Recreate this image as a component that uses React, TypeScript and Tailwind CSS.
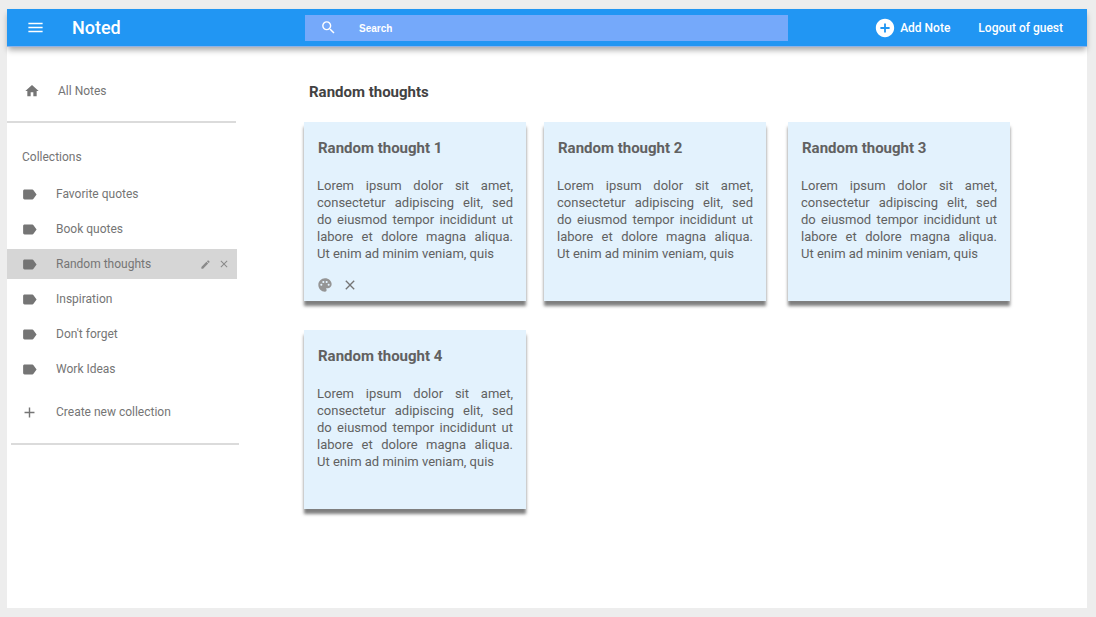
import { useState } from "react";
import {
  MdAdd,
  MdAddCircle,
  MdClose,
  MdEdit,
  MdHome,
  MdLabel,
  MdMenu,
  MdPalette,
  MdSearch,
} from "react-icons/md";

const collections = [
  "Favorite quotes",
  "Book quotes",
  "Random thoughts",
  "Inspiration",
  "Don't forget",
  "Work Ideas",
];

// The no-break space keeps "Ut enim" together at the start of the last sentence.
const noteText =
  "Lorem ipsum dolor sit amet, consectetur adipiscing elit, sed do eiusmod tempor incididunt ut labore et dolore magna aliqua. Ut\u00a0enim ad minim veniam, quis";

const notes = [1, 2, 3, 4].map((n) => ({
  title: `Random thought ${n}`,
  text: noteText,
  showActions: n === 1,
}));

function Header() {
  return (
    <header className="relative flex h-[38px] items-center border-b border-[#8fb2e6] bg-[#2196f3] pr-6 pl-[19px] text-white shadow-[0_4px_6px_-1px_rgba(0,0,0,0.35)]">
      <div className="flex w-[279px] shrink-0 items-center gap-[27px]">
        <button type="button" aria-label="Menu">
          <MdMenu className="size-[19px]" />
        </button>
        <h1 className="text-[18px] leading-6 font-medium">Noted</h1>
      </div>
      <label className="flex h-[26px] max-w-[483px] flex-1 items-center gap-[22px] bg-[#75a9fa] pl-[15px]">
        <MdSearch className="size-[17px]" />
        <input
          type="search"
          aria-label="Search"
          placeholder="Search"
          className="min-w-0 flex-1 bg-transparent pt-[2px] font-['Liberation_Sans',sans-serif] text-[10px] font-bold outline-none placeholder:text-white"
        />
      </label>
      <nav className="ml-auto flex shrink-0 items-center gap-7 text-[12px] font-medium">
        <button type="button" className="flex items-center gap-[4px]">
          <MdAddCircle className="size-[22px]" />
          Add Note
        </button>
        <a href="#logout">Logout of guest</a>
      </nav>
    </header>
  );
}

function Sidebar({
  selected,
  onSelect,
}: {
  selected: string;
  onSelect: (name: string) => void;
}) {
  return (
    <aside className="w-[232px] shrink-0 pt-[29px] text-[12px] text-[#757575]">
      <a href="#all" className="flex h-[30px] items-center gap-[18px] pl-[17px]">
        <MdHome className="size-4" />
        All Notes
      </a>
      <hr className="mt-[15px] w-[229px] border-t-2 border-[#dbdbdb]" />
      <h2 className="mt-[19px] pl-[15px] leading-[30px]">Collections</h2>
      <ul className="mt-[7px] flex flex-col gap-[5px]">
        {collections.map((name) => (
          <li
            key={name}
            className={
              name === selected
                ? "flex h-[30px] w-[230px] items-center bg-[#d6d6d6] pr-[7px]"
                : "flex h-[30px] w-[230px] items-center pr-[7px]"
            }
          >
            <button
              type="button"
              onClick={() => onSelect(name)}
              className="flex flex-1 items-center gap-[18px] pl-[14px]"
            >
              <MdLabel className="size-[17px]" />
              {name}
            </button>
            {name === selected && (
              <span className="flex items-center gap-[7px] text-[#8a8a8a]">
                <button type="button" aria-label="Edit collection">
                  <MdEdit className="size-[11px]" />
                </button>
                <button type="button" aria-label="Delete collection">
                  <MdClose className="size-[12px]" />
                </button>
              </span>
            )}
          </li>
        ))}
      </ul>
      <button
        type="button"
        className="mt-[13px] flex h-[30px] items-center gap-[18px] pl-[14px]"
      >
        <MdAdd className="size-[17px]" />
        Create new collection
      </button>
      <hr className="mt-4 ml-1 border-t-2 border-[#dbdbdb]" />
    </aside>
  );
}

function NoteCard({ note }: { note: (typeof notes)[number] }) {
  return (
    <article className="h-[179px] w-[222px] bg-[#e3f2fd] px-[13px] pt-[16px] shadow-[0_5px_3px_rgba(0,0,0,0.5)]">
      <h3 className="pl-px text-[15px] leading-5 font-bold text-[#616161]">
        {note.title}
      </h3>
      <p className="mt-[19px] text-justify text-[13px] leading-[17px] text-[#616161]">
        {note.text}
      </p>
      {note.showActions && (
        <div className="mt-[15px] flex gap-[9px]">
          <button type="button" aria-label="Change colour">
            <MdPalette className="size-4 text-[#959595]" />
          </button>
          <button type="button" aria-label="Delete note">
            <MdClose className="size-4 text-[#757575]" />
          </button>
        </div>
      )}
    </article>
  );
}

export default function App() {
  const [selected, setSelected] = useState("Random thoughts");
  return (
    <div className="flex min-h-screen flex-col bg-[#ededed] pt-[9px] pr-[9px] pb-[9px] pl-[7px] font-[Roboto,sans-serif]">
      <Header />
      <div className="flex flex-1 bg-white">
        <Sidebar selected={selected} onSelect={setSelected} />
        <main className="flex-1 pt-[34px] pl-[65px]">
          <h2 className="pl-[5px] text-[15px] leading-[22px] font-bold text-[#424242]">
            {selected}
          </h2>
          <div className="mt-[19px] grid grid-cols-[240px_244px_222px] gap-y-[29px]">
            {notes.map((note) => (
              <NoteCard key={note.title} note={note} />
            ))}
          </div>
        </main>
      </div>
    </div>
  );
}
